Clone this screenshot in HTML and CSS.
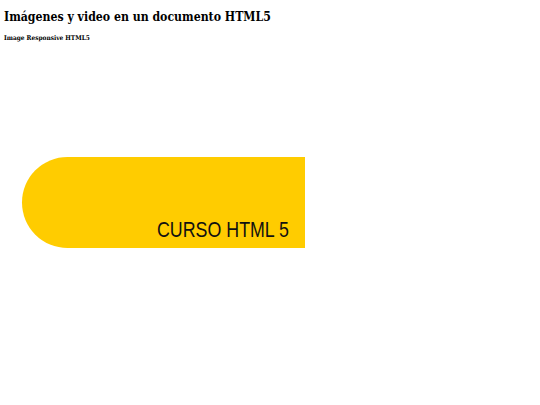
FILE: index.html
```html
<!DOCTYPE html>
<html lang="es">
<head>
<meta charset="utf-8">
<title>Imágenes y video en un documento HTML5</title>
<link rel="stylesheet" href="styles.css">
</head>
<body>
<h1 class="title">Imágenes y video en un documento HTML5</h1>
<p class="subtitle">Image Responsive HTML5</p>
<div class="banner">
  <span class="banner-text">CURSO HTML 5</span>
</div>
</body>
</html>
```
FILE: styles.css
```css
html, body {
  margin: 0;
  padding: 0;
  background: #ffffff;
}
body {
  padding: 4px;
  font-family: "DejaVu Serif", serif;
  color: #000;
}
.title {
  margin: 5px 0 0 0;
  font-size: 12.2px;
  line-height: 16px;
  font-weight: bold;
  font-stretch: condensed;
}
.subtitle {
  margin: 9px 0 0 0;
  font-size: 6.5px;
  line-height: 8px;
  font-weight: bold;
  font-stretch: condensed;
}
.banner {
  margin: 115px 0 0 18px;
  width: 283px;
  height: 91px;
  background: #ffcc00;
  border-radius: 46px 0 0 46px;
  display: flex;
  justify-content: flex-end;
  align-items: flex-end;
  box-sizing: border-box;
  padding: 0 16px 7px 0;
}
.banner-text {
  font-family: "Liberation Sans", Arial, sans-serif;
  font-size: 22px;
  line-height: 22px;
  color: #111;
  display: inline-block;
  transform: scaleX(0.81);
  transform-origin: right bottom;
}
```
